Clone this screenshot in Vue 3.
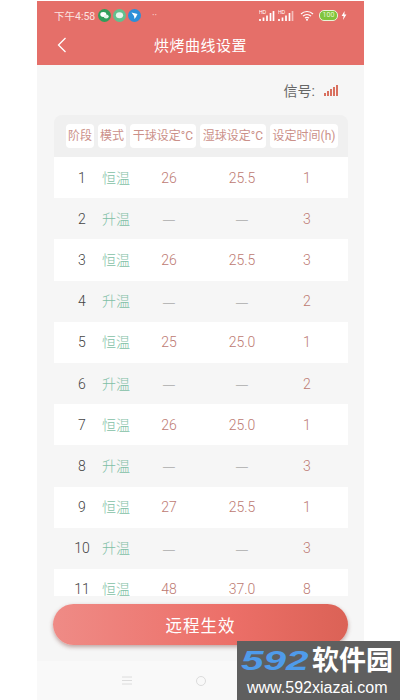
<script setup>
const headers = [
  { text: '阶段', cls: 'h-stage' },
  { text: '模式', cls: 'h-mode' },
  { text: '干球设定°C', cls: 'h-temp' },
  { text: '湿球设定°C', cls: 'h-temp' },
  { text: '设定时间(h)', cls: 'h-time' }
];

const rows = [
  { id: 1, mode: '恒温', dry: '26', wet: '25.5', time: 1 },
  { id: 2, mode: '升温', dry: '—', wet: '—', time: 3 },
  { id: 3, mode: '恒温', dry: '26', wet: '25.5', time: 3 },
  { id: 4, mode: '升温', dry: '—', wet: '—', time: 2 },
  { id: 5, mode: '恒温', dry: '25', wet: '25.0', time: 1 },
  { id: 6, mode: '升温', dry: '—', wet: '—', time: 2 },
  { id: 7, mode: '恒温', dry: '26', wet: '25.0', time: 1 },
  { id: 8, mode: '升温', dry: '—', wet: '—', time: 3 },
  { id: 9, mode: '恒温', dry: '27', wet: '25.5', time: 1 },
  { id: 10, mode: '升温', dry: '—', wet: '—', time: 3 },
  { id: 11, mode: '恒温', dry: '48', wet: '37.0', time: 8 }
];
</script>

<template>
  <div class="page">
    <div class="phone">
      <header class="top">
        <div class="status">
          <span class="clock">下午4:58</span>
          <svg class="app" viewBox="0 0 13 13" width="13" height="13">
            <circle cx="6.500" cy="6.500" r="6.500" fill="#2f9e5a" />
            <ellipse cx="5.300" cy="5.500" rx="3" ry="2.400" fill="#fff" />
            <ellipse cx="8.200" cy="7.500" rx="2.500" ry="2" fill="#e4f5ea" />
          </svg>
          <svg class="app" viewBox="0 0 13 13" width="13" height="13">
            <circle cx="6.500" cy="6.500" r="6.500" fill="#63c08e" />
            <ellipse cx="6.500" cy="6.300" rx="3.600" ry="3" fill="#e6f6ec" />
          </svg>
          <svg class="app" viewBox="0 0 13 13" width="13" height="13">
            <circle cx="6.500" cy="6.500" r="6.500" fill="#2c8fd8" />
            <path d="M3.500 3.500 9.500 5 8 8 6.500 10 6 7z" fill="#fff" />
          </svg>
          <span class="more">··</span>
          <span class="spacer"></span>
          <svg class="cell" viewBox="0 0 16 12" width="16" height="12">
            <text x="0" y="4.500" font-size="5" fill="#fff" font-family="Liberation Sans, sans-serif">HD</text>
            <path d="M1 12V10M4.500 12V8.500M8 12V6.500M11.500 12V4M14.500 12V2" stroke="#fff" stroke-width="1.700" fill="none" />
          </svg>
          <svg class="cell" viewBox="0 0 16 12" width="16" height="12">
            <text x="0" y="4.500" font-size="5" fill="#fff" font-family="Liberation Sans, sans-serif">HD</text>
            <path d="M1 12V10M4.500 12V8.500M8 12V6.500M11.500 12V4" stroke="#fff" stroke-width="1.700" fill="none" />
            <path d="M14.500 12V2" stroke="#fff" stroke-opacity=".55" stroke-width="1.700" fill="none" />
          </svg>
          <svg class="wifi" viewBox="0 0 14 11" width="14" height="11">
            <path d="M1 4a8.500 8.500 0 0 1 12 0M3 6.200a5.600 5.600 0 0 1 8 0M5 8.200a2.800 2.800 0 0 1 4 0" stroke="#fff" stroke-width="1.200" fill="none" />
            <circle cx="7" cy="9.800" r="1" fill="#fff" />
          </svg>
          <span class="battery">100</span>
          <svg class="bolt" viewBox="0 0 6 9" width="6" height="9">
            <path d="M3.600 0 .6 5h2L2 9l3.400-5.400h-2z" fill="#fff" />
          </svg>
        </div>
        <div class="nav">
          <svg class="back" viewBox="0 0 10 16" width="10" height="16">
            <path d="M8.500 1 1.500 8l7 7" stroke="#fff" stroke-width="1.300" fill="none" />
          </svg>
          <h1 class="title">烘烤曲线设置</h1>
        </div>
      </header>

      <main class="content">
        <div class="signal">
          <span>信号:</span>
          <svg viewBox="0 0 14 11" width="14" height="11">
            <path d="M1 11V8M4 11V6M7 11V4M10 11V2M13 11V0" stroke="#d9705f" stroke-width="2" fill="none" />
          </svg>
        </div>

        <div class="table">
          <div class="table-head">
            <span v-for="h in headers" :key="h.text" class="head-cell" :class="h.cls">{{ h.text }}</span>
          </div>
          <div class="table-body">
            <div v-for="r in rows" :key="r.id" class="row">
              <span class="stage">{{ r.id }}</span>
              <span class="mode">{{ r.mode }}</span>
              <span class="val" :class="{ dash: r.dry === '—' }">{{ r.dry }}</span>
              <span class="val" :class="{ dash: r.wet === '—' }">{{ r.wet }}</span>
              <span class="val">{{ r.time }}</span>
            </div>
          </div>
        </div>

        <button class="apply">远程生效</button>
      </main>

      <footer class="softkeys">
        <svg viewBox="0 0 10 9" width="10" height="9">
          <path d="M0 1h10M0 4.500h10M0 8h10" stroke="#dcdcdc" stroke-width="1" fill="none" />
        </svg>
        <svg viewBox="0 0 12 12" width="12" height="12">
          <circle cx="6" cy="6" r="4.500" stroke="#dcdcdc" stroke-width="1" fill="none" />
        </svg>
      </footer>
    </div>

    <div class="watermark">
      <div class="wm-logo"><b>592</b><span>软件园</span></div>
      <div class="wm-url">www.592xiazai.com</div>
    </div>
  </div>
</template>

<style>
body {
  background: #fff;
}
</style>

<style scoped>
.page {
  position: relative;
  width: 400px;
  height: 700px;
  overflow: hidden;
  background: #fff;
  padding: 1px 36px 0 37px;
  box-sizing: border-box;
  font-family: Roboto, "Noto Sans CJK SC", sans-serif;
}

.phone {
  height: 699px;
  display: flex;
  flex-direction: column;
  background: #f6f6f6;
}

.top {
  height: 64px;
  background: #e56f69;
  color: #fff;
  flex-shrink: 0;
}

.status {
  height: 28px;
  display: flex;
  align-items: center;
  padding: 0 17px;
}

.clock {
  width: 44px;
  font-size: 10.5px;
  white-space: nowrap;
  color: #fbe3e0;
}

.app {
  margin-right: 2px;
}

.more {
  color: #fbd5d1;
  font-size: 10px;
  margin-left: 9px;
}

.spacer {
  flex: 1;
}

.cell {
  margin-right: 3px;
}

.wifi {
  margin: 0 5px 0 3px;
}

.battery {
  width: 17px;
  height: 9px;
  line-height: 9px;
  border-radius: 5px;
  background: #7fc43c;
  border: 1px solid #e8f5d8;
  color: #e7f7d2;
  font-size: 7px;
  text-align: center;
}

.bolt {
  margin-left: 3px;
}

.nav {
  position: relative;
  height: 34px;
  display: flex;
  align-items: center;
  justify-content: center;
  padding-bottom: 3px;
  box-sizing: border-box;
}

.back {
  position: absolute;
  left: 20px;
  top: 8px;
}

.title {
  margin: 0;
  font-size: 15px;
  font-weight: 400;
  color: #fff;
  letter-spacing: 0.5px;
}

.content {
  flex: 1;
  padding: 0 16px 0 17px;
  min-height: 0;
}

.signal {
  height: 50px;
  display: flex;
  align-items: center;
  justify-content: flex-end;
  gap: 9px;
  padding-right: 10px;
  font-size: 14px;
  color: #666;
}

.table {
  height: 481px;
  overflow: hidden;
}

.table-head {
  height: 42px;
  background: #f0f0f0;
  border-radius: 8px 8px 0 0;
  display: flex;
  align-items: center;
  padding-left: 12px;
  gap: 4px;
  box-sizing: border-box;
}

.head-cell {
  height: 24px;
  line-height: 24px;
  background: #fff;
  border-radius: 4px;
  font-size: 12px;
  color: #cb9089;
  text-align: center;
  white-space: nowrap;
}

.h-stage {
  width: 28px;
}

.h-mode {
  width: 28px;
}

.h-temp {
  width: 66px;
}

.h-time {
  width: 68px;
}

.row {
  height: 41.2px;
  display: grid;
  grid-template-columns: 32px 36px 70px 76px 54px;
  padding-left: 12px;
  align-items: center;
  text-align: center;
  font-size: 14px;
  font-weight: 300;
  line-height: 1;
}

.row:nth-child(odd) {
  background: #fff;
}

.stage {
  color: #444;
}

.mode {
  color: #7fbfa6;
}

.val {
  color: #bd7a72;
}

.dash {
  color: #aaa;
  font-family: "Noto Sans CJK SC", sans-serif;
  font-size: 15px;
}

.apply {
  display: block;
  width: 295px;
  height: 41px;
  margin: 8px 0 0 -1px;
  border: none;
  border-radius: 21px;
  background: linear-gradient(90deg, #ef8b86, #ec6f68 60%, #db6256);
  box-shadow: 0 2px 4px rgba(120, 60, 55, 0.45);
  color: #fff;
  font-family: inherit;
  font-size: 16.500px;
  letter-spacing: 1px;
}

.softkeys {
  height: 39px;
  margin-top: auto;
  background: #f9f9f9;
  display: flex;
  align-items: center;
  gap: 63px;
  padding-left: 85px;
  flex-shrink: 0;
}

.watermark {
  position: absolute;
  left: 237px;
  top: 641px;
  width: 163px;
  height: 59px;
  background: #5f5f5f;
  color: #fff;
  padding: 3px 0 0 4px;
  box-sizing: border-box;
}

.wm-logo {
  display: flex;
  align-items: center;
  height: 34px;
  white-space: nowrap;
}

.wm-logo b {
  width: 71px;
  font-family: "Liberation Sans", sans-serif;
  font-size: 27px;
  font-weight: 700;
  font-style: italic;
  color: #4f9bea;
  transform: scaleX(1.500);
  transform-origin: left center;
}

.wm-logo span {
  font-size: 27px;
  line-height: 34px;
  font-weight: 700;
}

.wm-url {
  font-family: "Liberation Sans", sans-serif;
  font-size: 16px;
  line-height: 18px;
  margin: 1px 0 0 6px;
  white-space: nowrap;
}
</style>
